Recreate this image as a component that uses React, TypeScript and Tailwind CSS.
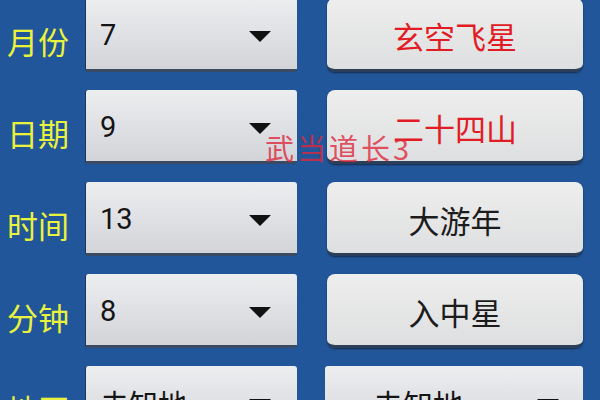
import React from "react";

const cjk = { fontFamily: '"Noto Sans CJK SC", "Noto Sans", sans-serif' };
const num = { fontFamily: 'Roboto, "Noto Sans CJK SC", sans-serif' };

function Arrow() {
  return (
    <svg width="22" height="11" viewBox="0 0 22 11" className="mt-[6px]">
      <polygon points="0,0 22,0 11,11" fill="#111" />
    </svg>
  );
}

function Spinner({ value, w, cjkText }: { value: string; w: string; cjkText?: boolean }) {
  return (
    <div
      className={`${w} h-[74px] shrink-0 rounded-[3px] bg-gradient-to-b from-[#eceef0] to-[#d2d4d8] border-b-[3px] border-b-[#3b4a63] border-l border-l-[#1a3560] flex items-center justify-between pl-[14px] pr-[26px]`}
    >
      <span className="text-[29px] text-[#151515] mt-[4px]" style={cjkText ? cjk : num}>
        {value}
      </span>
      <Arrow />
    </div>
  );
}

function Btn({ text, red }: { text: string; red?: boolean }) {
  return (
    <div className="w-[256px] h-[74px] shrink-0 rounded-[8px] bg-gradient-to-b from-[#eeeeee] to-[#dedfe0] border-b-[3px] border-b-[#2d3e58] shadow-[0_1px_2px_rgba(0,0,0,0.5)] flex items-center justify-center">
      <span
        className={`text-[31px] leading-none mt-[3px] ${red ? "text-[#e21c24]" : "text-[#1c1c1c]"}`}
        style={cjk}
      >
        {text}
      </span>
    </div>
  );
}

function Label({ text }: { text: string }) {
  return (
    <div className="w-[85px] shrink-0 pl-[7px] pt-[10px] text-[31px] text-[#e9f23c] leading-none" style={cjk}>
      {text}
    </div>
  );
}

export default function App() {
  const rows = [
    { label: "月份", value: "7", btn: "玄空飞星", red: true },
    { label: "日期", value: "9", btn: "二十四山", red: true },
    { label: "时间", value: "13", btn: "大游年", red: false },
    { label: "分钟", value: "8", btn: "入中星", red: false },
  ];
  return (
    <div className="relative w-[600px] h-[400px] overflow-hidden bg-[#22569a]">
      <div className="flex flex-col gap-[18px] mt-[-2px]">
        {rows.map((r) => (
          <div key={r.label} className="flex items-center">
            <Label text={r.label} />
            <Spinner value={r.value} w="w-[212px]" />
            <div className="ml-[30px]">
              <Btn text={r.btn} red={r.red} />
            </div>
          </div>
        ))}
        <div className="flex items-center">
          <Label text="地区" />
          <Spinner value="未知地" w="w-[212px]" cjkText />
          <div className="ml-[28px]">
            <div className="w-[258px] h-[74px] rounded-[3px] bg-gradient-to-b from-[#eceef0] to-[#d2d4d8] border-b-[3px] border-b-[#3b4a63] flex items-center justify-between pl-[48px] pr-[24px]">
              <span className="text-[30px] text-[#151515] mt-[4px]" style={cjk}>
                未知地
              </span>
              <Arrow />
            </div>
          </div>
        </div>
      </div>
      <div
        className="absolute left-[265px] top-[133px] text-[29px] leading-none tracking-[3px] text-[rgba(222,40,60,0.8)]"
        style={cjk}
      >
        武当道长3
      </div>
    </div>
  );
}
